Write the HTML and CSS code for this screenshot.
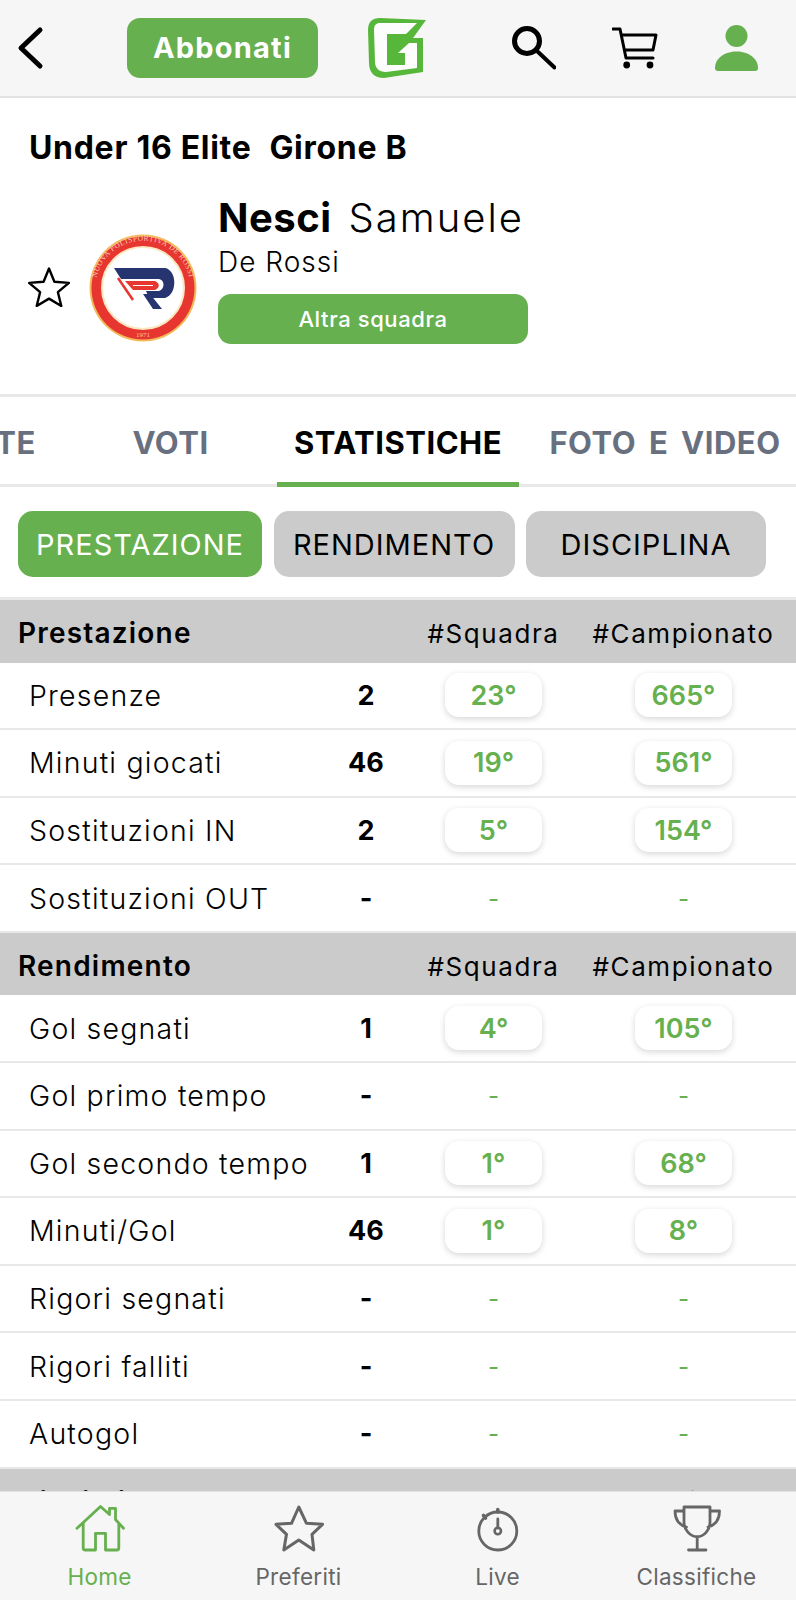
FILE: index.html
```html
<!DOCTYPE html>
<html lang="it">
<head>
<meta charset="utf-8">
<title>Statistiche</title>
<link rel="stylesheet" href="styles.css">
</head>
<body>
<div class="page">
  <header class="topbar">
    <svg class="ic-back" viewBox="0 0 30 44"><path d="M25 4 6 22l19 18" fill="none" stroke="#000" stroke-width="5" stroke-linecap="round" stroke-linejoin="round"/></svg>
    <div class="abbonati">Abbonati</div>
    <svg class="ic-logo" viewBox="8 7 59 62"><path d="M20 8 66 10 53 28H63V62L24 68C14 68 9 62 9 53L8 20C8 12 12 8 20 8Z" fill="#57b73a"/><path d="M20 13 57 13 46 24H27V55H45V43H38L49 33H57V58L26 62C19 62 15 58 15 52L14 20C14 15 16 13 20 13Z" fill="#fdfdfd"/></svg>
    <svg class="ic-search" viewBox="0 0 44 44"><circle cx="15" cy="15" r="12.500" fill="none" stroke="#000" stroke-width="5"/><path d="m24.500 24.500 18 17" stroke="#000" stroke-width="4" stroke-linecap="round"/></svg>
    <svg class="ic-cart" viewBox="0 0 46 42"><path d="M1 2H8L14 31H41M10 8H44L41 23H13" fill="none" stroke="#000" stroke-width="3" stroke-linecap="round" stroke-linejoin="round"/><circle cx="14.700" cy="38" r="3.400"/><circle cx="38" cy="38" r="3.400"/></svg>
    <svg class="ic-user" viewBox="0 0 44 48"><circle cx="21.500" cy="12" r="11" fill="#66b04f"/><path d="M0 44C0 34 10 27.500 21.500 27.500S43 34 43 44C43 46 42 47 40 47H3C1 47 0 46 0 44Z" fill="#66b04f"/></svg>
  </header>

  <section class="info">
    <h1 class="league"><span>Under 16 Elite</span><span>Girone B</span></h1>
    <div class="player">
      <svg class="ic-star" viewBox="0 0 42 40"><path d="m21 1.500 5.400 13.300 14.500 1.100-11 9.300 3.400 13.800L21 31.600 8.700 39l3.400-13.800-11-9.300 14.500-1.100Z" fill="none" stroke="#000" stroke-width="2.400" stroke-linejoin="round"/></svg>
      <svg class="crest" viewBox="0 0 108 108">
        <circle cx="54" cy="54" r="53.500" fill="#f3b95a"/>
        <circle cx="54" cy="54" r="51.500" fill="#e7352f"/>
        <circle cx="54" cy="54" r="41" fill="#fff" stroke="#fbe6c0" stroke-width="2"/>
        <defs><path id="arc" d="M8 66A47.500 47.500 0 1 1 100 66"/></defs>
        <text class="crest-t"><textPath href="#arc" startOffset="50%" text-anchor="middle">NUOVA POLISPORTIVA DE ROSSI</textPath></text>
        <text class="crest-y" x="54" y="103" text-anchor="middle">1971</text>
        <path d="M25 34H76C88 36 89 60 76 64H60L57 57H70C76 55 76 46 70 45H32Z" fill="#26346f"/>
        <path d="M36 47H66C71 49 71 54 66 56H44Z" fill="#e7352f"/>
        <path d="M44 51.500H64" stroke="#fff" stroke-width="1"/>
        <path d="M54 60H61L73 75H64Z" fill="#26346f"/>
        <path d="M29 44 44 66" stroke="#e7352f" stroke-width="2.500"/>
      </svg>
      <div class="who">
        <div class="name"><b>Nesci</b><span>Samuele</span></div>
        <div class="team">De Rossi</div>
        <div class="other">Altra squadra</div>
      </div>
    </div>
  </section>

  <nav class="tabs">
    <div class="tab">PARTITE</div>
    <div class="tab">VOTI</div>
    <div class="tab tab-on">STATISTICHE</div>
    <div class="tab">FOTO E VIDEO</div>
  </nav>

  <div class="chips">
    <div class="chip chip-on">PRESTAZIONE</div>
    <div class="chip">RENDIMENTO</div>
    <div class="chip chip-last">DISCIPLINA</div>
  </div>

  <main class="stats">
    <div class="thead"><div class="ttl">Prestazione</div><div></div><div class="cc">#Squadra</div><div class="cc">#Campionato</div></div>
    <div class="row"><div class="lbl">Presenze</div><div class="val">2</div><div class="cc"><span class="pill">23°</span></div><div class="cc"><span class="pill">665°</span></div></div>
    <div class="row"><div class="lbl">Minuti giocati</div><div class="val">46</div><div class="cc"><span class="pill">19°</span></div><div class="cc"><span class="pill">561°</span></div></div>
    <div class="row"><div class="lbl">Sostituzioni IN</div><div class="val">2</div><div class="cc"><span class="pill">5°</span></div><div class="cc"><span class="pill">154°</span></div></div>
    <div class="row"><div class="lbl">Sostituzioni OUT</div><div class="val">-</div><div class="cc dash">-</div><div class="cc dash">-</div></div>

    <div class="thead"><div class="ttl">Rendimento</div><div></div><div class="cc">#Squadra</div><div class="cc">#Campionato</div></div>
    <div class="row"><div class="lbl">Gol segnati</div><div class="val">1</div><div class="cc"><span class="pill">4°</span></div><div class="cc"><span class="pill">105°</span></div></div>
    <div class="row"><div class="lbl">Gol primo tempo</div><div class="val">-</div><div class="cc dash">-</div><div class="cc dash">-</div></div>
    <div class="row"><div class="lbl">Gol secondo tempo</div><div class="val">1</div><div class="cc"><span class="pill">1°</span></div><div class="cc"><span class="pill">68°</span></div></div>
    <div class="row"><div class="lbl">Minuti/Gol</div><div class="val">46</div><div class="cc"><span class="pill">1°</span></div><div class="cc"><span class="pill">8°</span></div></div>
    <div class="row"><div class="lbl">Rigori segnati</div><div class="val">-</div><div class="cc dash">-</div><div class="cc dash">-</div></div>
    <div class="row"><div class="lbl">Rigori falliti</div><div class="val">-</div><div class="cc dash">-</div><div class="cc dash">-</div></div>
    <div class="row"><div class="lbl">Autogol</div><div class="val">-</div><div class="cc dash">-</div><div class="cc dash">-</div></div>

    <div class="thead"><div class="ttl">Disciplina</div><div></div><div class="cc">#Squadra</div><div class="cc">#Campionato</div></div>
  </main>

  <footer class="bottom">
    <div class="nav nav-on">
      <svg class="nav-ic" viewBox="0 0 50 48"><path d="M2 23.300 25.500 1.500 34.500 9.500V3.300H40.500V14.500L48.500 23.300M8.200 18.300V43Q8.200 45 10.200 45H20.500V28.300H30.500V45H41.800Q43.800 45 43.800 43V18.300" fill="none" stroke="#66b04f" stroke-width="2.800" stroke-linecap="round" stroke-linejoin="round"/></svg>
      <span>Home</span>
    </div>
    <div class="nav">
      <svg class="nav-ic" viewBox="0 0 50 48"><path d="M24.800 2 32.500 18.300 48.500 19.300 38 29.300 39.800 45 24.800 35 9.800 45 12.500 29.300 2 19.300 17.500 18.300Z" fill="none" stroke="#666" stroke-width="3" stroke-linejoin="round"/></svg>
      <span>Preferiti</span>
    </div>
    <div class="nav">
      <svg class="nav-ic" viewBox="0 0 50 48"><circle cx="24.800" cy="26" r="19" fill="none" stroke="#666" stroke-width="2.800"/><path d="M24.800 4.500V7M10.500 10.500 12.500 13" stroke="#666" stroke-width="3.600" stroke-linecap="round"/><path d="M24.800 14V23" stroke="#666" stroke-width="2.800" stroke-linecap="round"/><circle cx="24.800" cy="26" r="3.200" fill="none" stroke="#666" stroke-width="2.600"/></svg>
      <span>Live</span>
    </div>
    <div class="nav">
      <svg class="nav-ic" viewBox="0 0 50 48"><path d="M12 2H38V17C38 25 32 31.700 25.200 31.700S12 25 12 17ZM12 6H3C3 14 7 20 14.500 22M38 6H47.500C47.500 14 43.500 20 36 22M25.200 32V45M16.500 45H34" fill="none" stroke="#666" stroke-width="2.800" stroke-linecap="round" stroke-linejoin="round"/></svg>
      <span>Classifiche</span>
    </div>
  </footer>
</div>
</body>
</html>
```

FILE: styles.css
```css
* { box-sizing: border-box; }
html, body { margin: 0; padding: 0; background: #fff; }
body { font-family: Inter, "Open Sans", sans-serif; color: #000; }
.page { position: relative; width: 796px; height: 1600px; overflow: hidden; background: #fff; }

.topbar { height: 98px; background: #f6f6f6; border-bottom: 2px solid #e2e2e2; display: flex; align-items: flex-start; }
.ic-back { width: 30px; height: 44px; margin: 26px 0 0 15px; flex: none; }
.abbonati { width: 191px; height: 60px; margin: 18px 0 0 82px; padding-bottom: 2px; flex: none; background: #66b04f; border-radius: 13px; color: #fff; font-size: 29px; font-weight: 700; letter-spacing: 1.2px; display: flex; align-items: center; justify-content: center; }
.ic-logo { width: 59px; height: 62px; margin: 17px 0 0 50px; flex: none; }
.ic-search { width: 44px; height: 44px; margin: 26px 0 0 85px; flex: none; }
.ic-cart { width: 46px; height: 42px; margin: 27px 0 0 56px; flex: none; }
.ic-user { width: 44px; height: 48px; margin: 24px 0 0 57px; flex: none; }

.info { height: 299px; border-bottom: 3px solid #e8e8e8; padding: 32px 0 0 29px; }
.league { margin: 0; font-size: 32px; font-weight: 700; letter-spacing: .7px; line-height: 36px; display: flex; gap: 18px; }
.player { display: flex; margin-top: 24px; align-items: flex-start; }
.ic-star { width: 42px; height: 40px; margin-top: 77px; margin-left: -1px; flex: none; }
.crest { width: 108px; height: 108px; margin: 44px 0 0 19px; flex: none; }
.crest-t { font-family: "Liberation Serif", serif; font-size: 7.500px; fill: #f7c9b8; letter-spacing: .5px; }
.crest-y { font-family: "Liberation Serif", serif; font-size: 7px; fill: #f7c9b8; }
.who { margin: 5px 0 0 21px; width: 310px; }
.name { font-size: 40px; line-height: 46px; display: flex; gap: 17px; font-weight: 300; }
.name b { font-weight: 700; letter-spacing: .5px; }
.name span { letter-spacing: 2px; }
.team { font-size: 28px; font-weight: 300; letter-spacing: 1px; line-height: 34px; margin-top: 4px; }
.other { height: 50px; margin-top: 15px; background: #66b04f; border-radius: 13px; color: #fff; font-size: 22px; font-weight: 500; letter-spacing: .6px; display: flex; align-items: center; justify-content: center; }

.tabs { height: 90px; border-bottom: 3px solid #e8e8e8; display: grid; grid-template-columns: 190px 213px 242px 292px; margin-left: -126px; width: 937px; }
.tab { display: flex; align-items: center; justify-content: center; padding-top: 3px; font-size: 31px; font-weight: 700; letter-spacing: .5px; word-spacing: 5px; color: #687080; white-space: nowrap; }
.tab-on { color: #000; border-bottom: 5px solid #66b04f; margin-bottom: -3px; padding-top: 5px; }

.chips { height: 113px; padding: 24px 0 0 18px; display: flex; gap: 11.500px; border-bottom: 3px solid #e8e8e8; }
.chip { width: 241px; height: 66px; background: #cbcbcb; border-radius: 15px; font-size: 29px; font-weight: 400; letter-spacing: 1px; display: flex; align-items: center; justify-content: center; }
.chip-on { width: 244px; background: #66b04f; color: #fff; }
.chip-last { width: 240px; }

.thead, .row { display: grid; grid-template-columns: 316px 100px 155px 225px; align-items: center; }
.thead { height: 62.500px; padding-top: 4px; background: #cbcbcb; font-size: 26px; letter-spacing: 1.600px; }
.ttl { font-size: 28px; font-weight: 600; letter-spacing: 1.200px; padding-left: 18px; }
.row { height: 67.600px; border-bottom: 2px solid #e8e8e8; }
.lbl { font-size: 28.500px; font-weight: 300; letter-spacing: 1.200px; padding-left: 29px; white-space: nowrap; }
.val { font-size: 27px; font-weight: 700; text-align: center; }
.cc { display: flex; justify-content: center; align-items: center; white-space: nowrap; }
.dash { color: #66b04f; font-size: 24px; }
.pill { width: 97px; height: 44px; border-radius: 14px; background: #fff; box-shadow: 0 2px 6px rgba(0,0,0,.16); color: #66b04f; font-size: 27px; font-weight: 600; display: flex; align-items: center; justify-content: center; }

.bottom { position: absolute; left: 0; right: 0; bottom: 0; height: 109px; background: #f6f6f6; border-top: 1px solid #dfe3e6; display: grid; grid-template-columns: repeat(4, 199px); }
.nav { display: flex; flex-direction: column; align-items: center; padding-top: 13px; color: #666; font-size: 22.500px; font-weight: 400; letter-spacing: .3px; }
.nav-ic { width: 50px; height: 48px; flex: none; }
.nav span { margin-top: 10px; line-height: 27px; }
.nav-on { color: #66b04f; }
```
